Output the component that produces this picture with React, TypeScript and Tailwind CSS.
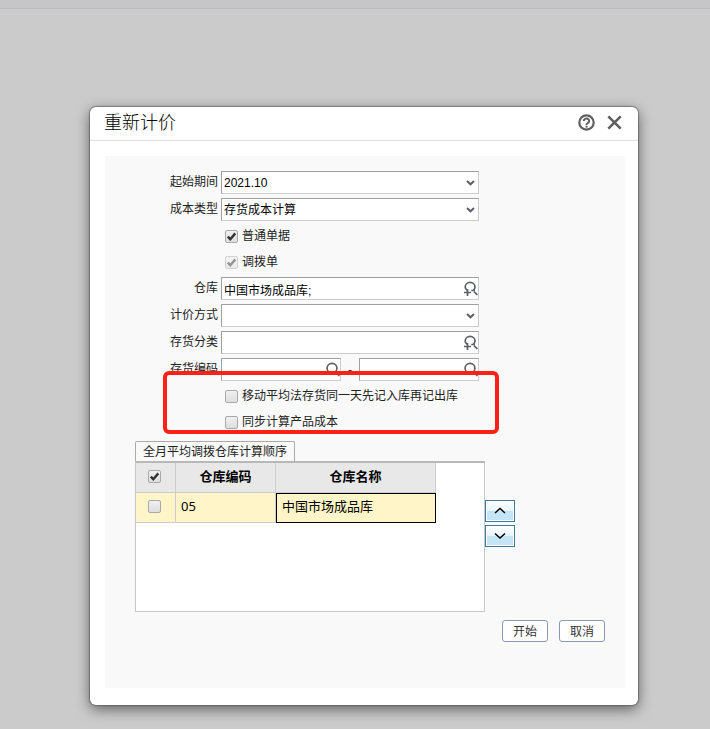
import React, { useState } from "react";
import clsx from "clsx";

const fieldBox =
  "h-[23px] w-full appearance-none rounded-none border border-t-[#a0a0a0] border-l-[#a0a0a0] border-r-[#ccc] border-b-[#ccc] bg-white pt-px pl-[2px] text-xs text-black outline-none";

export default function App() {
  return (
    <div className="min-h-screen bg-[#cbcbcb] font-['Liberation_Sans','Noto_Sans_CJK_SC',sans-serif] text-xs text-[#222]">
      <div className="h-[9px] border-b border-[#b9bbc0] bg-[#c6c6c6]" />
      <div className="pt-[98px] pr-[72px] pb-6 pl-[90px]">
        <RepriceDialog />
      </div>
    </div>
  );
}

function RepriceDialog() {
  return (
    <section
      role="dialog"
      aria-labelledby="dialog-title"
      className="rounded-md bg-white pb-[17px] shadow-[0_0_1px_1px_rgba(80,80,80,0.55),0_4px_14px_rgba(0,0,0,0.55)]"
    >
      <header className="flex h-[34px] items-center justify-between border-b border-[#e0e0e0] pr-4 pb-[2px] pl-[14px]">
        <h1 id="dialog-title" className="text-lg font-light text-black">
          重新计价
        </h1>
        <div className="flex items-center gap-3">
          <button type="button" aria-label="帮助" className="text-[#5f5f5f]">
            <HelpIcon />
          </button>
          <button type="button" aria-label="关闭" className="text-[#5f5f5f]">
            <CloseIcon />
          </button>
        </div>
      </header>

      <form className="mt-[15px] mr-[13px] ml-[15px] bg-[#f9f9f9] pt-[15px] pb-[46px]" onSubmit={(e) => e.preventDefault()}>
        <SelectRow id="period" label="起始期间" options={["2021.10"]} />
        <SelectRow id="cost-type" label="成本类型" options={["存货成本计算"]} />
        <CheckRow label="普通单据" initial />
        <CheckRow label="调拨单" initial disabled />
        <Row id="warehouse" label="仓库">
          <LookupInput id="warehouse" value="中国市场成品库;" multiple />
        </Row>
        <SelectRow id="method" label="计价方式" options={[""]} />
        <Row id="category" label="存货分类">
          <LookupInput id="category" multiple />
        </Row>
        <Row id="code-from" label="存货编码">
          <LookupInput id="code-from" />
          <span className="w-[18px] shrink-0 text-center">-</span>
          <LookupInput id="code-to" ariaLabel="存货编码至" />
        </Row>

        <div className="relative">
          <CheckRow label="移动平均法存货同一天先记入库再记出库" />
          <CheckRow label="同步计算产品成本" />
          {/* highlight frame */}
          <div className="pointer-events-none absolute -top-[14px] bottom-[3px] left-[58px] w-[336px] rounded-md border-4 border-[#ff2116]" />
        </div>

        <WarehouseOrder />

        <div className="mt-2 flex justify-end gap-[11px] pr-5">
          <ActionButton>开始</ActionButton>
          <ActionButton>取消</ActionButton>
        </div>
      </form>
    </section>
  );
}

function Row({ id, label, children }: { id: string; label: string; children: React.ReactNode }) {
  return (
    <div className="flex items-start pb-1">
      <label htmlFor={id} className="w-[116px] shrink-0 pr-[3px] text-right leading-[22px]">
        {label}
      </label>
      <div className="flex max-w-[258px] flex-1 items-center">{children}</div>
    </div>
  );
}

function SelectRow({ id, label, options }: { id: string; label: string; options: string[] }) {
  return (
    <Row id={id} label={label}>
      <div className="relative w-full">
        <select id={id} className={fieldBox}>
          {options.map((o) => (
            <option key={o}>{o}</option>
          ))}
        </select>
        <svg className="pointer-events-none absolute top-[9px] right-[4px]" width="9" height="7" viewBox="0 0 9 7" fill="none" stroke="#5c6068" strokeWidth="2">
          <path d="M1 1l3.5 3.3L8 1" />
        </svg>
      </div>
    </Row>
  );
}

type LookupProps = { id: string; value?: string; ariaLabel?: string; multiple?: boolean };

function LookupInput({ id, value = "", ariaLabel, multiple }: LookupProps) {
  return (
    <div className="relative min-w-0 flex-1">
      <input id={id} type="text" defaultValue={value} aria-label={ariaLabel} className={clsx(fieldBox, "pr-5")} />
      <button type="button" aria-label="查找" className="absolute top-1 right-px text-[#5c5f66]">
        <svg width="15" height="16" viewBox="0 0 15 16" fill="none" stroke="currentColor" strokeWidth="1.7">
          {multiple ? (
            <>
              <path d="M3.9 9.2C2.6 8 2.2 7.2 2.2 6a4.9 4.6 0 0 1 9.8 0c0 1.3-.6 2.3-1.8 3.5H8.2M10 9.5h2" />
              <path d="M1 11.5h7M4.5 8v7" />
              <path d="M11 10.6l3.4 3.4" />
            </>
          ) : (
            <>
              <circle cx="7" cy="6.3" r="4.9" />
              <path d="M10.4 9.8l4 4" />
            </>
          )}
        </svg>
      </button>
    </div>
  );
}

function CheckRow({ label, initial = false, disabled }: { label: string; initial?: boolean; disabled?: boolean }) {
  return (
    <div className="flex h-[26px] items-center pb-1 pl-[120px]">
      <label className="flex items-center gap-1">
        <Checkbox initial={initial} disabled={disabled} />
        <span>{label}</span>
      </label>
    </div>
  );
}

function Checkbox({ initial = false, disabled, label }: { initial?: boolean; disabled?: boolean; label?: string }) {
  const [checked, setChecked] = useState(initial);

  return (
    <span className={clsx("relative inline-block size-[13px]", disabled && "opacity-50")}>
      <input
        type="checkbox"
        checked={checked}
        disabled={disabled}
        aria-label={label}
        onChange={() => setChecked(!checked)}
        className="block size-[13px] appearance-none rounded-[2px] border border-[#a9a9a9] bg-linear-to-b from-[#f0f0f0] to-[#dedede]"
      />
      {checked && (
        <svg className="pointer-events-none absolute top-0 left-0" width="13" height="13" viewBox="0 0 13 13" fill="none" stroke="#333" strokeWidth="2.4">
          <path d="M2.8 6.6l2.5 2.6L10.3 3.4" />
        </svg>
      )}
    </span>
  );
}

function WarehouseOrder() {
  const cell = "border-r border-b border-[#ccc] pb-[2px]";

  return (
    <div className="mt-1 flex items-start pl-[30px]">
      <div className="w-[350px]">
        <div className="flex">
          <button type="button" className="h-5 w-[160px] rounded-t-[2px] border border-b-0 border-[#aaa] bg-[#f9f9f9] text-center leading-[18px]">
            全月平均调拨仓库计算顺序
          </button>
        </div>
        <div className="h-[151px] border border-t-2 border-[#c8c8c8] border-t-[#b8b8b8] bg-white">
          <table className="w-[300px] table-fixed border-separate border-spacing-0 text-[13px] text-black">
            <thead>
              <tr className="h-[30px] bg-[#e8e8e8]">
                <th className={clsx(cell, "w-10")}>
                  <span className="flex justify-center pr-[3px]">
                    <Checkbox initial label="全选" />
                  </span>
                </th>
                <th className={clsx(cell, "w-[100px] font-bold")}>仓库编码</th>
                <th className={clsx(cell, "w-[160px] font-bold")}>仓库名称</th>
              </tr>
            </thead>
            <tbody>
              <tr className="h-[30px] bg-[#fff5c8]">
                <td className={cell}>
                  <span className="flex justify-center pr-[3px]">
                    <Checkbox label="05" />
                  </span>
                </td>
                <td className={clsx(cell, "pl-[5px] font-['Noto_Sans',sans-serif]")}>05</td>
                <td className="border border-black pb-[2px] pl-[5px]">中国市场成品库</td>
              </tr>
            </tbody>
          </table>
        </div>
      </div>
      <div className="mt-[59px] flex flex-col gap-[3px]">
        <MoveButton label="上移" path="M1 6l5-4.5L11 6" />
        <MoveButton label="下移" path="M1 1.5L6 6l5-4.5" />
      </div>
    </div>
  );
}

function MoveButton({ label, path }: { label: string; path: string }) {
  return (
    <button
      type="button"
      aria-label={label}
      className="flex h-[22px] w-[30px] items-center justify-center border border-[#3c7a9e] bg-[linear-gradient(#fff,#e6f4fc_50%,#c4e5f6_50%)] shadow-[inset_0_0_0_1px_#fff]"
    >
      <svg width="12" height="8" viewBox="0 0 12 8" fill="none" stroke="#000" strokeWidth="1.5">
        <path d={path} />
      </svg>
    </button>
  );
}

function ActionButton({ children }: { children: React.ReactNode }) {
  return (
    <button type="button" className="h-[22px] w-[46px] rounded-[3px] border border-[#8a99ad] bg-white pt-[2px] leading-[18px] text-[#333]">
      {children}
    </button>
  );
}

function HelpIcon() {
  return (
    <svg width="17" height="17" viewBox="0 0 17 17" fill="none" stroke="currentColor" strokeWidth="2">
      <circle cx="8.5" cy="8.5" r="7.2" strokeWidth="2.2" />
      <path d="M5.8 7a2.7 2.4 0 1 1 4.2 1.9c-.9.6-1.5.9-1.5 2" />
      <path d="M8.5 11.8v1.8" />
    </svg>
  );
}

function CloseIcon() {
  return (
    <svg width="15" height="15" viewBox="0 0 15 15" fill="none" stroke="currentColor" strokeWidth="2.6">
      <path d="M1.3 1.3l12.4 12.4M13.7 1.3L1.3 13.7" />
    </svg>
  );
}
